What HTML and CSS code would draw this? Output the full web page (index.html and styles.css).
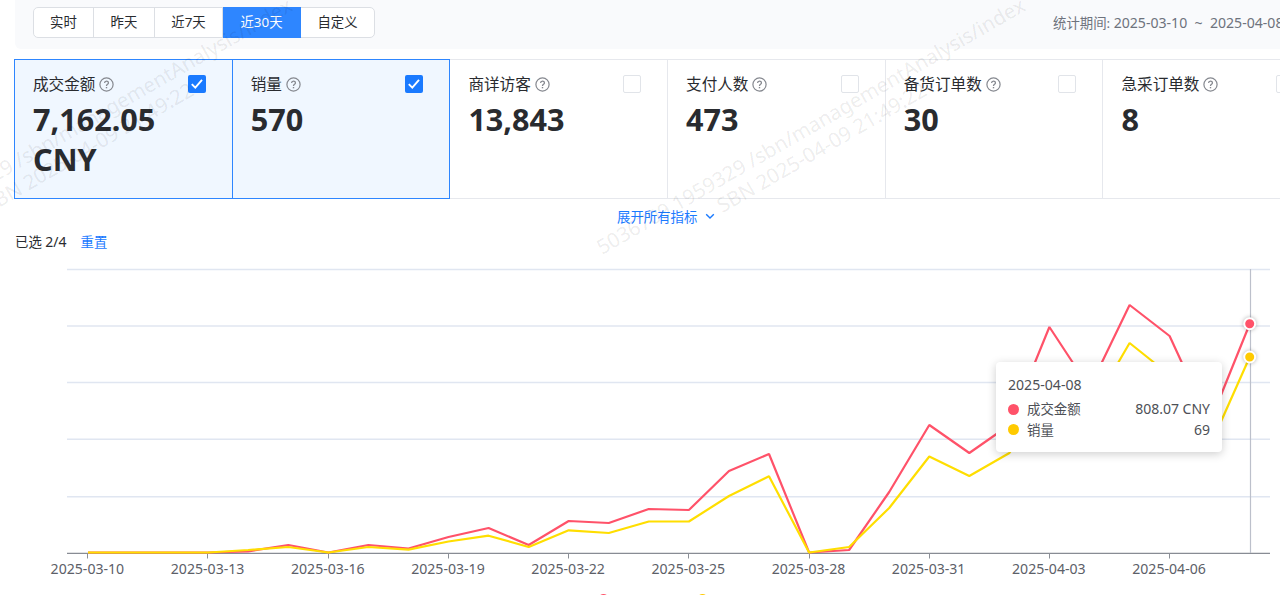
FILE: index.html
```html
<!DOCTYPE html>
<html lang="zh-CN">

<head>
    <meta charset="UTF-8">
    <meta name="viewport" content="width=device-width, initial-scale=1.0">
    <title>经营分析</title>
    <link rel="stylesheet" href="styles.css">
</head>

<body>
    <header class="toolbar">
        <div class="range">
            <button class="range-item r1">实时</button>
            <button class="range-item r2">昨天</button>
            <button class="range-item r3">近7天</button>
            <button class="range-item r4 active">近30天</button>
            <button class="range-item r5">自定义</button>
        </div>
        <div class="period">统计期间: <span class="num">2025-03-10 &nbsp;~&nbsp; 2025-04-08</span></div>
    </header>

    <main>
        <!-- 指标卡片由脚本渲染 -->
        <section class="cards" id="cards"></section>

        <div class="expand">
            <span>展开所有指标</span>
            <svg width="10" height="7" viewBox="0 0 10 7"><path d="M1.2 1.2 5 5l3.8-3.8" fill="none" stroke="#1a7aff" stroke-width="1.4"/></svg>
        </div>
        <div class="selected"><span>已选 <span class="num">2/4</span></span><a class="reset">重置</a></div>

        <section class="chart">
            <svg id="chart" width="1280" height="327" viewBox="0 260 1280 327"></svg>
            <div class="tooltip">
                <div class="tip-date">2025-04-08</div>
                <div class="tip-row"><i class="dot red"></i><span class="tip-name">成交金额</span><span class="tip-val">808.07 CNY</span></div>
                <div class="tip-row"><i class="dot yellow"></i><span class="tip-name">销量</span><span class="tip-val">69</span></div>
            </div>
        </section>
        <!-- 图例 -->
        <div class="legend">
            <i class="dot red"></i>
            <i class="dot yellow"></i>
        </div>
    </main>

    <!-- 水印 -->
    <svg class="watermark" width="1280" height="595">
        <g transform="translate(-131 255) rotate(-30)">
            <text x="0" y="0">5036709 1959329 /sbn/managementAnalysis/index</text>
            <text x="125" y="24">SBN 2025-04-09 21:49:22</text>
        </g>
        <g transform="translate(602 255) rotate(-30)">
            <text x="0" y="0">5036709 1959329 /sbn/managementAnalysis/index</text>
            <text x="125" y="24">SBN 2025-04-09 21:49:22</text>
        </g>
    </svg>

    <script>
        const cards = [
            { name: "成交金额", value: "7,162.05 CNY", checked: true },
            { name: "销量", value: "570", checked: true },
            { name: "商详访客", value: "13,843" },
            { name: "支付人数", value: "473" },
            { name: "备货订单数", value: "30" },
            { name: "急采订单数", value: "8" }
        ]
        const help = `<svg class="help" width="15" height="15" viewBox="0 0 15 15" fill="none" stroke="#85888f">
            <circle cx="7.5" cy="7.5" r="6.6" stroke-width="1.2"/>
            <path d="M5.6 6.1c0-2.5 3.8-2.5 3.8-.2 0 1.4-1.9 1.4-1.9 3" stroke-width="1.3"/>
            <path d="M7.5 10v1.3" stroke-width="1.4"/></svg>`
        const tick = `<svg width="18" height="18" viewBox="0 0 18 18"><path d="M3.8 9.2l3.5 3.5 6.7-7.8" fill="none" stroke="#fff" stroke-width="1.9"/></svg>`

        document.querySelector("#cards").innerHTML = cards.map(c => `
            <div class="card ${c.checked ? "checked" : ""}">
                <div class="card-head"><span class="card-name">${c.name}</span>${help}<span class="checkbox">${c.checked ? tick : ""}</span></div>
                <div class="card-value">${c.value}</div>
            </div>`).join("")

        // 折线各点的纵坐标
        const amount = [552.5, 552.5, 552.5, 552.5, 551.3, 545, 552.5, 545, 548.5, 537, 528, 545, 521, 523, 509, 510, 471, 454, 552.5, 550, 492, 425, 453, 425, 327, 388, 305, 336, 423, 324]
        const sales = [552.5, 552.5, 552.5, 552.5, 550, 547, 552.5, 547, 549.7, 541.5, 535.7, 547, 530.3, 533, 521.5, 521.5, 496, 476.3, 552.5, 547, 508, 456.5, 476, 453, 390, 412, 343, 375, 447, 357]
        const px = i => 88 + i * 40.06
        const line = (data, color) => `<polyline points="${data.map((y, i) => px(i).toFixed(1) + "," + y).join(" ")}" fill="none" stroke="${color}" stroke-width="2.2" stroke-linejoin="bevel"/>`

        let str = ""
        for (const y of [269.5, 326, 382.5, 439.3, 496.7]) {
            str += `<path d="M67 ${y}H1270" stroke="#e0e6f1" stroke-width="1.4"/>`
        }
        str += `<path d="M67 553.3H1270" stroke="#888c94" stroke-width="1.2"/>`
        const days = ["2025-03-10", "2025-03-13", "2025-03-16", "2025-03-19", "2025-03-22", "2025-03-25", "2025-03-28", "2025-03-31", "2025-04-03", "2025-04-06"]
        days.forEach((d, i) => {
            const x = px(i * 3)
            str += `<path d="M${Math.floor(x) - (i < 2 ? 0.5 : -0.5)} 553v5.5" stroke="#8b8f97"/><text class="axis" x="${x - 0.6}" y="574">${d}</text>`
        })
        str += line(amount, "#ff5269") + line(sales, "#ffde00")
        str += `<path d="M1250.5 269V553" stroke="#bcc0cb" stroke-width="1.2"/>`
        str += `<circle class="mark" cx="1249.7" cy="323.7" r="5.5" fill="#ff5269"/><circle class="mark" cx="1249.7" cy="357" r="5.5" fill="#ffca00"/>`
        document.querySelector("#chart").innerHTML = str
    </script>
</body>

</html>
```
FILE: styles.css
```css
* {
    box-sizing: border-box;
}

body {
    margin: 0;
    width: 1280px;
    height: 595px;
    overflow: hidden;
    position: relative;
    background-color: #fff;
    color: #292b2f;
    font-family: "Noto Sans", "Noto Sans CJK SC", sans-serif;
    font-size: 13.4px;
}

.toolbar {
    height: 49px;
    margin-left: 15px;
    padding: 7px 0 0 18px;
    display: flex;
    align-items: flex-start;
    background-color: #f9fafc;
    border-bottom-left-radius: 6px;
    overflow: hidden;
}

.range {
    display: flex;
    flex: none;
    height: 31px;
    border: 1px solid #dcdfe4;
    border-radius: 5px;
    background-color: #fff;
}

.range-item {
    border: 0;
    border-right: 1px solid #dcdfe4;
    padding: 0;
    background: none;
    color: inherit;
    font: inherit;
    line-height: 29px;
}

.r1 {
    width: 60px;
}

.r2 {
    width: 61px;
}

.r3 {
    width: 68px;
}

.r4 {
    width: 78px;
}

.r5 {
    width: 73px;
    border-right: 0;
}

.range-item.active {
    margin: -1px 0;
    background-color: #2e86ff;
    border-color: #2e86ff;
    color: #fff;
}

.period {
    margin-left: 678px;
    line-height: 31px;
    white-space: nowrap;
    color: #6e737d;
}

.num {
    font-size: 14px;
}

.period .num {
    font-size: 14.1px;
}

.cards {
    display: flex;
    margin: 10px 0 0 14px;
    height: 140px;
    width: 1309px;
    border: 1px solid #e6e8ed;
}

.card {
    width: 217.7px;
    flex: none;
    padding: 12px 0 0 18px;
    border-right: 1px solid #e6e8ed;
}

.card.checked {
    margin: -1px 0;
    padding-top: 12px;
    background-color: #f0f7ff;
    border: 1px solid #2e86ff;
    border-left: 0;
}

.card.checked:first-child {
    margin-left: -1px;
    width: 218.7px;
    border-left: 1px solid #2e86ff;
}

.card-head {
    display: flex;
    align-items: center;
    height: 24px;
    padding-right: 26px;
    font-size: 15.6px;
    line-height: 24px;
}

.help {
    margin-left: 4px;
}

.checkbox {
    width: 18px;
    height: 18px;
    margin: -1px 0 0 auto;
    border: 1px solid #e1e4e9;
    border-radius: 2px;
    background-color: #fff;
}

.checked .checkbox {
    border: 0;
    background-color: #1a7aff;
}

.checkbox svg {
    display: block;
}

.card-value {
    width: 160px;
    margin-top: 3px;
    font-size: 30.6px;
    font-weight: 700;
    line-height: 40px;
}

.expand {
    display: flex;
    align-items: center;
    gap: 8px;
    height: 20px;
    margin: 7px 0 0 617px;
    color: #1a7aff;
}

.selected {
    display: flex;
    gap: 14px;
    height: 20px;
    margin: 6px 0 0 15px;
    line-height: 20px;
}

.reset {
    color: #1a7aff;
}

.chart {
    position: relative;
    height: 327px;
    margin-top: 8px;
}

.chart svg {
    display: block;
}

.axis {
    font-size: 14.1px;
    fill: #5c6068;
    text-anchor: middle;
}

.mark {
    stroke: #fff;
    stroke-width: 2;
    filter: drop-shadow(0 0 2px rgba(0, 0, 0, 0.3));
}

/* 悬浮提示 */
.tooltip {
    position: absolute;
    left: 996px;
    top: 102px;
    width: 226px;
    height: 90px;
    padding: 12px 12px 0;
    border-radius: 4px;
    background-color: #fff;
    box-shadow: 0 2px 10px rgba(0, 0, 0, 0.2);
    color: #4d5056;
}

.tip-date {
    height: 25px;
    font-size: 14.1px;
    line-height: 22px;
}

.tip-row {
    display: flex;
    align-items: center;
    height: 20.5px;
    line-height: 20px;
}

.dot {
    width: 11px;
    height: 11px;
    border-radius: 50%;
}

.red {
    background-color: #ff5269;
}

.yellow {
    background-color: #ffca00;
}

.tip-name {
    margin-left: 8px;
}

.tip-val {
    margin-left: auto;
    font-size: 14px;
}

.legend {
    display: flex;
    gap: 88px;
    margin: 7px 0 0 598px;
}

.watermark {
    position: absolute;
    left: 0;
    top: 0;
    pointer-events: none;
    font-size: 20.4px;
    fill: rgba(0, 0, 0, 0.085);
}
```
